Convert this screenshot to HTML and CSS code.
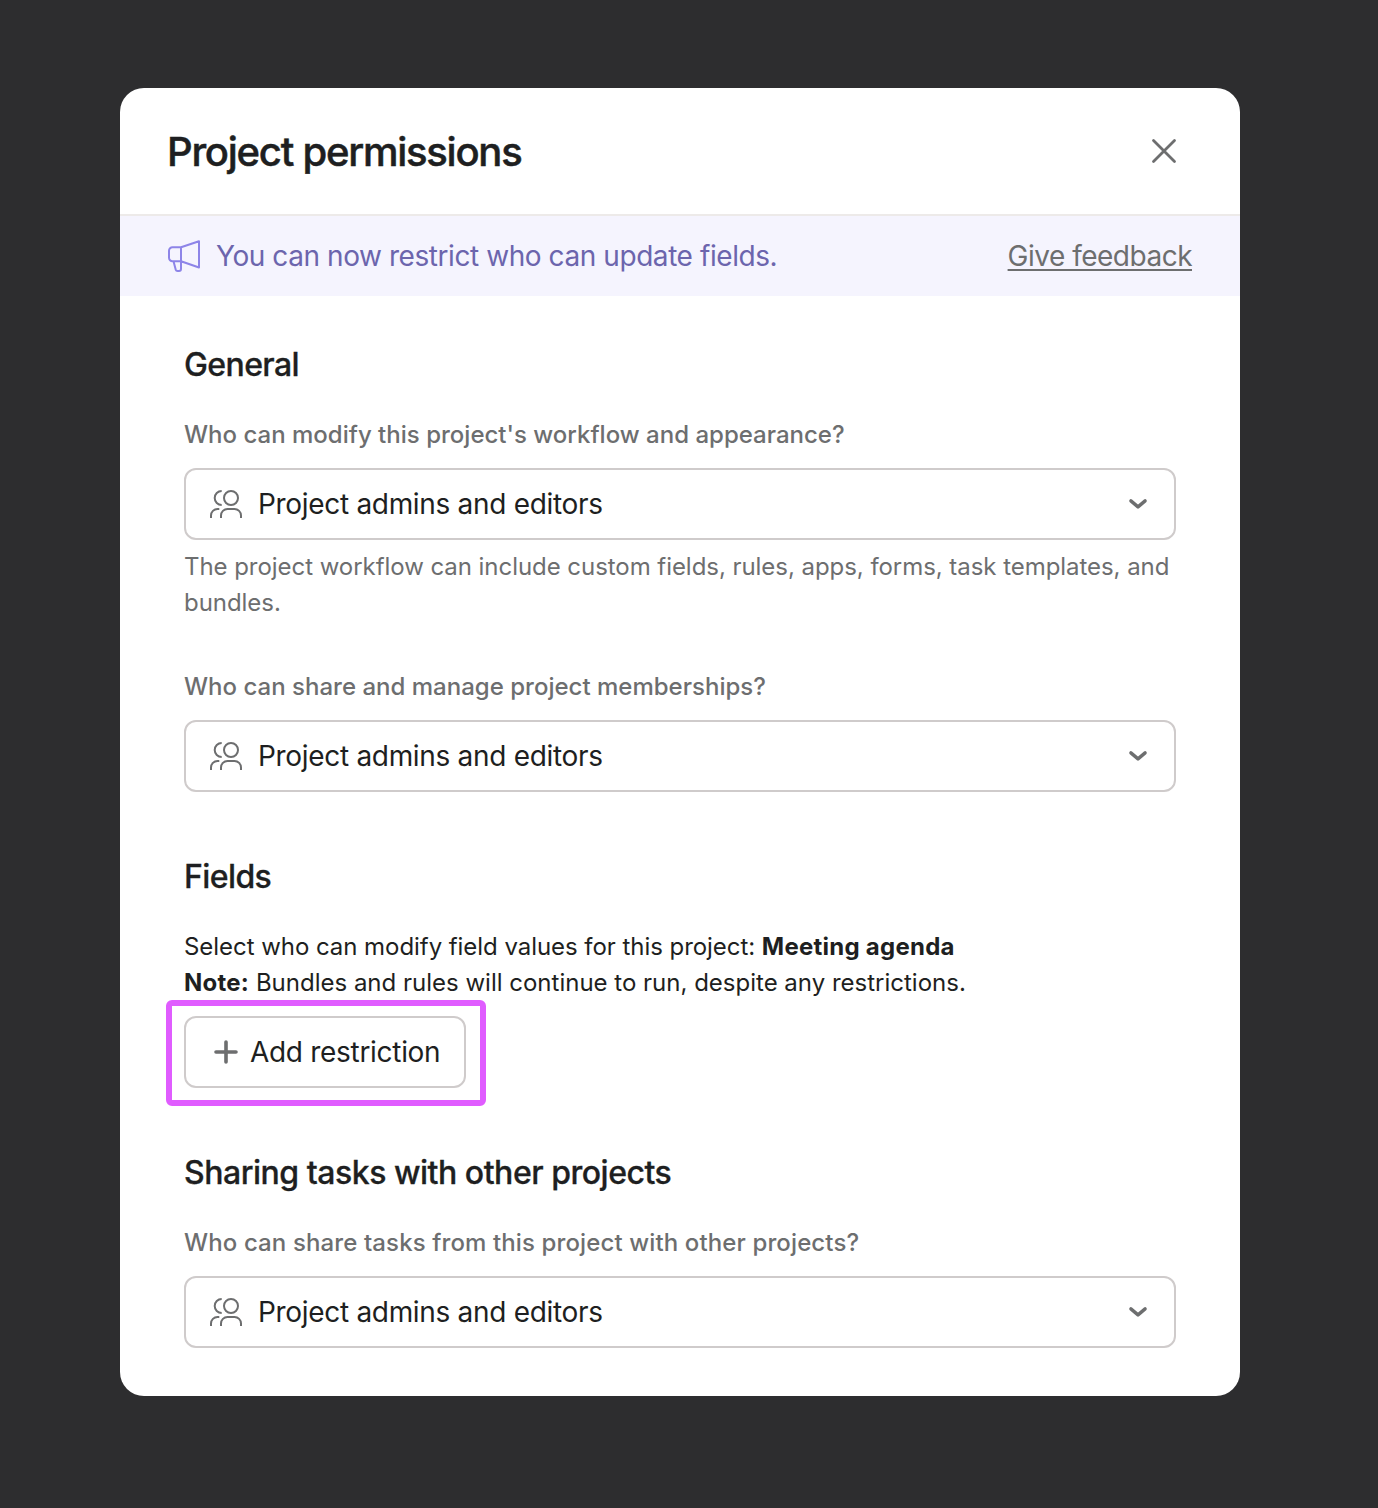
FILE: index.html
```
<!DOCTYPE html>
<html lang="en">
<head>
    <meta charset="UTF-8">
    <meta name="viewport" content="width=device-width, initial-scale=1.0">
    <title>Project permissions</title>
    <link rel="stylesheet" href="styles.css">
</head>
<body>
    <!-- Shared icons -->
    <svg class="sprite" aria-hidden="true">
        <symbol id="icon-people" viewBox="0 0 32 32">
            <circle cx="21" cy="10" r="7"/>
            <path d="M11 30v-2.500a6.500 6.500 0 0 1 6.500-6.500h7a6.500 6.500 0 0 1 6.500 6.500v2.500"/>
            <path d="M11.700 3a7 7 0 0 0 0 14M1 30v-2.500a6.500 6.500 0 0 1 6.500-6.500h1.800"/>
        </symbol>
        <symbol id="icon-chevron" viewBox="0 0 20 12">
            <path d="M2.900 2.900l7.100 6 7.100-6"/>
        </symbol>
    </svg>

    <div class="modal" role="dialog" aria-labelledby="modal-title">
        <header class="modal-header">
            <h1 id="modal-title">Project permissions</h1>
            <button class="close-btn" aria-label="Close">
                <svg width="26" height="26" viewBox="0 0 26 26"><path d="M2.500 2.500l21 21M23.500 2.500l-21 21"/></svg>
            </button>
        </header>

        <div class="banner">
            <svg class="megaphone" width="34" height="34" viewBox="0 0 34 34">
                <path d="M13 8.300L31 2.300v26.200L13 22.200M13 8.300H4.500A3.500 3.500 0 0 0 1 11.800v6.900a3.500 3.500 0 0 0 3.500 3.500H13zM5.500 22.200l2.200 8.400a2 2 0 0 0 1.900 1.400H11a2 2 0 0 0 2-2v-7.800"/>
            </svg>
            <span class="banner-text">You can now restrict who can update fields.</span>
            <a class="feedback" href="#">Give feedback</a>
        </div>

        <div class="modal-body">
            <!-- General -->
            <section>
                <h2>General</h2>
                <div class="field">
                    <span class="label">Who can modify this project's workflow and appearance?</span>
                    <button class="select">
                        <svg class="people"><use href="#icon-people"/></svg>
                        <span>Project admins and editors</span>
                        <svg class="chevron"><use href="#icon-chevron"/></svg>
                    </button>
                    <p class="help">The project workflow can include custom fields, rules, apps, forms, task templates, and bundles.</p>
                </div>
                <div class="field">
                    <span class="label">Who can share and manage project memberships?</span>
                    <button class="select">
                        <svg class="people"><use href="#icon-people"/></svg>
                        <span>Project admins and editors</span>
                        <svg class="chevron"><use href="#icon-chevron"/></svg>
                    </button>
                </div>
            </section>

            <!-- Fields -->
            <section>
                <h2>Fields</h2>
                <p class="text">Select who can modify field values for this project: <strong>Meeting agenda</strong></p>
                <p class="text note"><strong>Note:</strong> Bundles and rules will continue to run, despite any restrictions.</p>
                <div class="highlight">
                    <button class="add-btn">
                        <svg width="24" height="24" viewBox="0 0 24 24"><path d="M12 2v20M2 12h20"/></svg>
                        <span>Add restriction</span>
                    </button>
                </div>
            </section>

            <!-- Sharing -->
            <section class="sharing">
                <h2>Sharing tasks with other projects</h2>
                <div class="field">
                    <span class="label">Who can share tasks from this project with other projects?</span>
                    <button class="select">
                        <svg class="people"><use href="#icon-people"/></svg>
                        <span>Project admins and editors</span>
                        <svg class="chevron"><use href="#icon-chevron"/></svg>
                    </button>
                </div>
            </section>
        </div>
    </div>
</body>
</html>
```
FILE: styles.css
```
* {
    box-sizing: border-box;
}
body {
    margin: 0;
    padding: 88px 0 112px 120px;
    background: #2d2d2f;
    color: #1e1f21;
    font-family: Inter, "Liberation Sans", sans-serif;
}
h1, h2, p {
    margin: 0;
}
button {
    font-family: inherit;
    color: inherit;
    background: #fff;
    cursor: pointer;
}
svg {
    fill: none;
    stroke: #6d6e6f;
    stroke-width: 2;
    flex-shrink: 0;
}
.sprite {
    display: none;
}
.modal {
    width: 1120px;
    height: 1308px;
    background: #fff;
    border-radius: 24px;
    overflow: hidden;
}

/* Header */
.modal-header {
    display: flex;
    align-items: center;
    justify-content: space-between;
    height: 128px;
    padding: 0 60px 0 47px;
    border-bottom: 2px solid #edeae9;
}
.modal-header h1 {
    font-size: 40px;
    line-height: 48px;
    font-weight: 500;
    letter-spacing: -1.25px;
    padding-top: 2px;
    -webkit-text-stroke: 0.5px #1e1f21;
}
.close-btn {
    display: flex;
    padding: 3px;
    border: none;
}
.close-btn svg {
    stroke-width: 2.8;
    stroke-linecap: round;
}

/* Banner */
.banner {
    display: flex;
    align-items: center;
    height: 80px;
    padding: 0 48px;
    background: #f5f4fe;
    font-size: 28px;
    line-height: 40px;
}
.megaphone {
    stroke: #8d84e8;
    stroke-linejoin: round;
    margin-right: 14px;
}
.banner-text {
    color: #6c65ad;
    letter-spacing: -0.43px;
}
.feedback {
    margin-left: auto;
    color: #6d6e6f;
    letter-spacing: -0.5px;
    text-underline-offset: 3px;
    text-decoration-thickness: 2px;
    text-decoration-skip-ink: none;
}

/* Body */
.modal-body {
    padding: 49px 64px 48px;
}
section + section {
    margin-top: 65px;
}
h2 {
    font-size: 32px;
    line-height: 40px;
    font-weight: 500;
    letter-spacing: -0.6px;
    margin-bottom: 32px;
    -webkit-text-stroke: 0.3px #1e1f21;
}
.sharing h2 {
    letter-spacing: -0.48px;
}
.field + .field {
    margin-top: 48px;
}
.label {
    display: block;
    margin-bottom: 15px;
    font-size: 24px;
    line-height: 36px;
    font-weight: 500;
    color: #6d6e6f;
    letter-spacing: 0.01px;
}
.sharing .label {
    letter-spacing: 0.12px;
}
.select {
    display: flex;
    align-items: center;
    width: 100%;
    height: 72px;
    padding: 0 26px 0 24px;
    border: 2px solid #cfcbcb;
    border-radius: 12px;
    font-size: 28px;
    letter-spacing: -0.31px;
}
.people {
    width: 32px;
    height: 32px;
    margin-right: 16px;
}
.chevron {
    width: 20px;
    height: 12px;
    margin-left: auto;
    stroke-width: 3.4;
    stroke-linecap: round;
    stroke-linejoin: round;
}
.help {
    margin-top: 9px;
    font-size: 24px;
    line-height: 36px;
    color: #6d6e6f;
    letter-spacing: -0.05px;
}
.text {
    font-size: 24px;
    line-height: 36px;
    letter-spacing: -0.05px;
}
.text strong {
    font-weight: 700;
    letter-spacing: 0.25px;
}
.note {
    letter-spacing: 0;
}

/* Pink outline around the button */
.highlight {
    width: 320px;
    margin: -1px 0 -18px -18px;
    padding: 10px 12px 12px;
    border: 6px solid #e05cff;
    border-radius: 6px;
}
.add-btn {
    display: flex;
    align-items: center;
    width: 282px;
    height: 72px;
    padding: 0 0 0 28px;
    border: 2px solid #cfcbcb;
    border-radius: 12px;
    font-size: 28px;
    letter-spacing: -0.3px;
    white-space: nowrap;
}
.add-btn svg {
    margin-right: 12px;
    stroke-width: 3.6;
    stroke-linecap: round;
}
```
